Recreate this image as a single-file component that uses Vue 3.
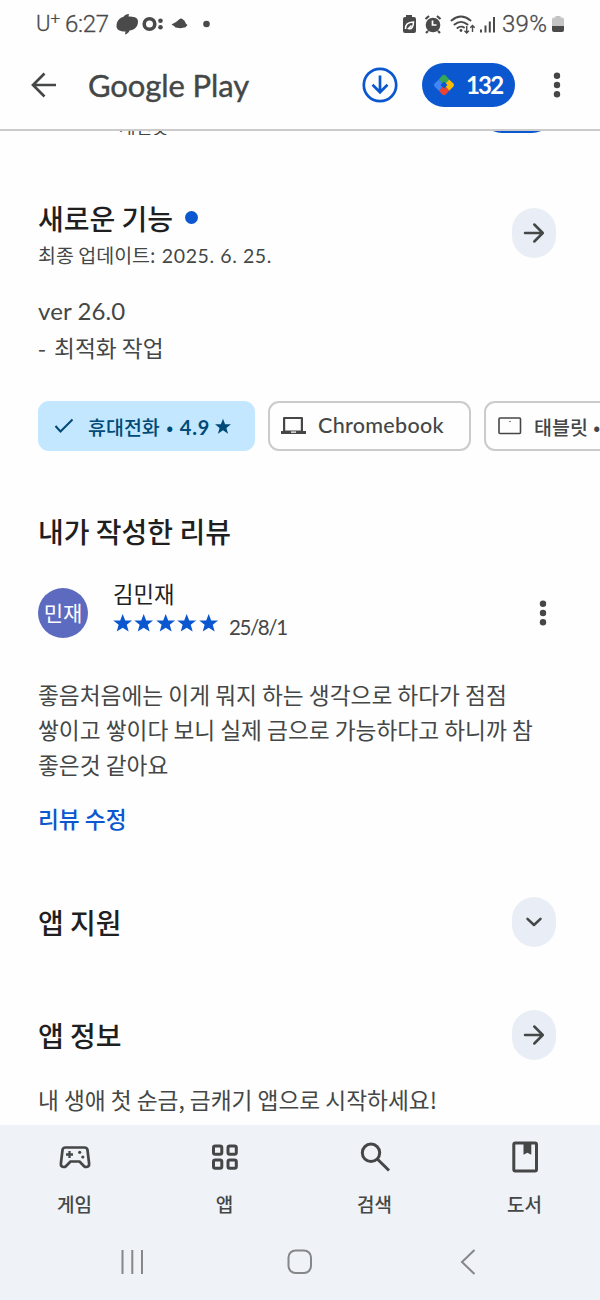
<script setup>
const reviewLines = [
  '좋음처음에는 이게 뭐지 하는 생각으로 하다가 점점',
  '쌓이고 쌓이다 보니 실제 금으로 가능하다고 하니까 참',
  '좋은것 같아요',
]
const star = 'M12 1.2l2.900 7.500h8l-6.200 5 2.200 7.800L12 17l-6.900 4.500 2.200-7.800-6.200-5h8z'
</script>

<template>
  <div class="screen">
    <div class="status">
      <span class="carrier">U<sup>+</sup></span>
      <span class="time">6:27</span>
      <svg class="notif" width="100" height="24" viewBox="0 0 100 24" fill="#4a4a4a">
        <path d="M13 2L12.500 4.500C17 4.500 22 5 22 9.500 22 15 18 18 13.500 18.500 13 20.500 11 22 9 22.500L9.500 19.500C4 19.500 .5 18 .5 14 .5 9 4 5.500 7.500 4.800 8.500 3.200 10.500 2.200 13 2z" />
        <circle cx="33.500" cy="12" r="5.300" fill="none" stroke="#4a4a4a" stroke-width="3.600" />
        <circle cx="44.500" cy="8.800" r="2.300" /><circle cx="44.500" cy="15.200" r="2.300" />
        <path d="M55.500 12.500l4.500-2.500 4-3.300q1-.6 2 0l2.500 2 1.500 3 1.500 1.300-2 2.200-5 1-5-.8-1.500-1.500z" />
        <circle cx="90.500" cy="12" r="3.300" />
      </svg>
      <svg class="sys" width="96" height="24" viewBox="0 0 96 24" fill="#4a4a4a">
        <path d="M5 3h6v2h2q2 0 2 2v12q0 2-2 2H4q-2 0-2-2V7q0-2 2-2h1z" />
        <path d="M4.500 17c0-5 2-6.500 8-7 0 5-2 7.500-5 6.500l3-3" fill="none" stroke="#fff" stroke-width="1.500" />
        <circle cx="32" cy="13" r="7.300" />
        <path d="M24.500 7l3.500-3M39.500 7L36 4M27 19l-2 2M37 19l2 2" stroke="#4a4a4a" stroke-width="2.200" />
        <path d="M31.500 8.500V13h4" fill="none" stroke="#fff" stroke-width="1.700" />
        <g fill="none" stroke="#4a4a4a" stroke-width="1.900" stroke-linecap="round">
          <path d="M50.500 8.500c6-5 13-5 19 0M53.500 12.500c4-3.500 9-3.500 13 0M56.500 16c2-1.800 5-1.800 6.500-.5" />
        </g>
        <circle cx="60" cy="18.500" r="1.400" />
        <path d="M65.700 14v7m-2.200-2.200l2.200 2.200 2.200-2.200M71.500 20v-6.500m-2.200 2.200l2.200-2.200 2.200 2.200" fill="none" stroke="#4a4a4a" stroke-width="1.400" />
        <path d="M80 17.500v3M84.500 13.500v7M88.800 9.500v11M93 5v15.500" stroke="#4a4a4a" stroke-width="2" />
      </svg>
      <span class="percent">39%</span>
      <svg class="battery" width="12" height="18" viewBox="0 0 12 18">
        <path d="M3.500 1h5v1.500H10q2 0 2 2V11H0V4.500q0-2 2-2h1.500z" fill="#c4c4c4" />
        <path d="M0 11h12v4q0 2-2 2H2q-2 0-2-2z" fill="#4a4a4a" />
      </svg>
    </div>

    <header class="header">
      <svg class="back" width="26" height="26" viewBox="0 0 26 26" fill="none" stroke="#444746" stroke-width="2.700">
        <path d="M25 13H2.500M13.500 1.500L2 13l11.500 11.500" />
      </svg>
      <span class="brand">Google Play</span>
      <svg class="download" width="36" height="36" viewBox="0 0 36 36" fill="none" stroke="#0b57d0" stroke-width="2.700">
        <circle cx="18" cy="18" r="16.200" />
        <path d="M18 8.500v16.500M10.500 17.800l7.500 7.500 7.500-7.500" />
      </svg>
      <div class="points">
        <svg width="22" height="24" viewBox="0 0 22 24">
          <path d="M5.800 6.500L9.300 2.600q1.700-1.600 3.400 0l3.500 3.900-5.200 5.500z" fill="#34a853" />
          <path d="M16.200 6.500l4.200 4q1.300 1.500 0 3l-4.200 4.200L11 12z" fill="#fbbc04" />
          <path d="M16.200 17.700l-3.500 3.700q-1.700 1.600-3.400 0l-3.500-3.700L11 12z" fill="#ea4335" />
          <path d="M5.800 6.500l-4.200 4q-1.300 1.500 0 3l4.200 4.200L11 12z" fill="#4285f4" />
          <path d="M11 8.500l3.500 3.500-3.500 3.500L7.500 12z" fill="#0b57d0" />
        </svg>
        <span>132</span>
      </div>
      <svg class="more" width="8" height="28" viewBox="0 0 8 28" fill="#444746">
        <circle cx="4" cy="4.700" r="3.200" /><circle cx="4" cy="14" r="3.200" /><circle cx="4" cy="23.300" r="3.200" />
      </svg>
    </header>

    <main class="content">
      <div class="previous"><span>개런못</span><i></i></div>

      <section class="news">
        <div>
          <h2 class="title">새로운 기능<b class="dot"></b></h2>
          <p class="updated">최종 업데이트: <span>2025. 6. 25.</span></p>
        </div>
        <button class="round">
          <svg width="22" height="22" viewBox="0 0 22 22"><path d="M2 11h17M11.300 2.500L19.800 11l-8.500 8.500" /></svg>
        </button>
      </section>
      <p class="version">ver 26.0</p>
      <p class="change"><span>-</span> 최적화 작업</p>

      <div class="chips">
        <div class="chip active">
          <svg class="check" width="20" height="16" viewBox="0 0 20 16" fill="none" stroke="#004a77" stroke-width="2"><path d="M1.500 8l5 5.500L18.500 1.500" /></svg>
          <span class="phone">휴대전화<em>•</em><strong>4.9</strong></span>
          <svg class="chip-star" width="16" height="16" viewBox="1 0 22 22" fill="#004a77"><path :d="star" /></svg>
        </div>
        <div class="chip chrome">
          <svg width="25" height="19" viewBox="0 0 25 19" fill="#444746"><path d="M4 0h17q1 0 1 1v13h3v3H0v-3h2V1q0-1 1-1zM4.200 2v11.500h15.600V2zM10 14.500v1.200h5v-1.200z" fill-rule="evenodd" /></svg>
          <span>Chromebook</span>
        </div>
        <div class="chip tablet">
          <svg width="24" height="18" viewBox="0 0 24 18" fill="none" stroke="#444746" stroke-width="1.600"><rect x="1" y="1" width="21.500" height="15.500" rx="1" /><circle cx="12" cy="4.500" r=".5" fill="#444746" stroke-width=".4" /></svg>
          <span>태블릿 <em>•</em></span>
        </div>
      </div>

      <h2 class="title mine">내가 작성한 리뷰</h2>
      <div class="author">
        <div class="avatar">민재</div>
        <div class="who">
          <div class="name">김민재</div>
          <div class="rating">
            <svg v-for="n in 5" :key="n" width="21.400" height="19" viewBox="1 0 22 22" fill="#0b57d0"><path :d="star" /></svg>
            <span>25/8/1</span>
          </div>
        </div>
        <svg class="more" width="8" height="28" viewBox="0 0 8 28" fill="#444746">
          <circle cx="4" cy="4.700" r="3.200" /><circle cx="4" cy="14" r="3.200" /><circle cx="4" cy="23.300" r="3.200" />
        </svg>
      </div>
      <div class="review"><p v-for="line in reviewLines" :key="line">{{ line }}</p></div>
      <a class="edit">리뷰 수정</a>

      <section class="row support">
        <h2 class="title">앱 지원</h2>
        <button class="round"><svg width="22" height="22" viewBox="0 0 22 22"><path d="M4.500 7.800L11 14l6.500-6.200" /></svg></button>
      </section>
      <section class="row info">
        <h2 class="title">앱 정보</h2>
        <button class="round"><svg width="22" height="22" viewBox="0 0 22 22"><path d="M2 11h17M11.300 2.500L19.800 11l-8.500 8.500" /></svg></button>
      </section>
      <p class="summary">내 생애 첫 순금, 금캐기 앱으로 시작하세요!</p>
    </main>

    <nav class="tabs">
      <div class="tab">
        <svg width="34" height="34" viewBox="0 0 34 34" fill="none" stroke="#444746" stroke-width="2.700" stroke-linejoin="round">
          <path d="M7.500 7.500h19q2.600 0 3 2.500l1.600 13.500q.3 3.500-3 3.500-1.200 0-2-.8L21.500 21.500h-9l-4.600 4.700q-.8.800-2 .8-3.300 0-3-3.500L4.500 10q.4-2.500 3-2.500z" />
          <path d="M8 14.500h7M11.500 11v7" stroke-width="2.300" />
          <circle cx="21.700" cy="12.300" r="1.600" fill="#444746" stroke="none" /><circle cx="24.800" cy="17" r="1.600" fill="#444746" stroke="none" />
        </svg><span>게임</span>
      </div>
      <div class="tab">
        <svg width="34" height="34" viewBox="0 0 34 34" fill="none" stroke="#444746" stroke-width="3">
          <rect x="5.500" y="6" width="8.300" height="8.300" rx="1.800" /><rect x="20" y="6" width="8.300" height="8.300" rx="1.800" />
          <rect x="5.500" y="20" width="8.300" height="8.300" rx="1.800" /><rect x="20" y="20" width="8.300" height="8.300" rx="1.800" />
        </svg><span>앱</span>
      </div>
      <div class="tab">
        <svg width="34" height="34" viewBox="0 0 34 34" fill="none" stroke="#444746" stroke-width="3"><circle cx="13" cy="12.800" r="8.700" /><path d="M19.300 19L31 30.500" /></svg><span>검색</span>
      </div>
      <div class="tab">
        <svg width="34" height="34" viewBox="0 0 34 34" fill="none" stroke="#444746" stroke-width="3"><rect x="5.800" y="3" width="22.700" height="28" rx="1.500" /><path d="M15.500 3v11.800l3.900-2 3.900 2V3z" fill="#444746" stroke="none" /></svg><span>도서</span>
      </div>
    </nav>
    <div class="system">
      <svg width="24" height="26" viewBox="0 0 24 26" fill="none" stroke="#858789" stroke-width="2"><path d="M2.500 1v24M12.300 1v24M22 1v24" /></svg>
      <svg width="26" height="26" viewBox="0 0 26 26" fill="none" stroke="#858789" stroke-width="2"><rect x="1.500" y="1.500" width="22.500" height="22.500" rx="7" /></svg>
      <svg width="16" height="26" viewBox="0 0 16 26" fill="none" stroke="#858789" stroke-width="2"><path d="M14.500 1L2 13l12.500 12" /></svg>
    </div>
  </div>
</template>

<style scoped>
* { box-sizing: border-box; }
h2, p { margin: 0; font-weight: 400; }
svg { display: block; flex: none; }
.screen {
  width: 600px; height: 1300px; overflow: hidden; display: flex; flex-direction: column;
  background: #fefefe; color: #444746; font-family: "Noto Sans CJK KR", sans-serif; white-space: nowrap;
}
.status { height: 47px; flex: none; display: flex; align-items: center; padding-left: 36px; font-family: Roboto, sans-serif; font-size: 24px; font-weight: 300; color: #4a4a4a; }
.status > span { -webkit-text-stroke: .3px #4a4a4a; }
.carrier { width: 29px; font-size: 22px; line-height: 28px; }
.carrier sup { font-size: 17px; line-height: 0; vertical-align: 7px; }
.time { width: 51px; letter-spacing: -.3px; }
.sys { margin-left: 185px; }
.percent { width: 51px; margin-left: 5px; letter-spacing: .3px; }
.battery { margin-left: -1px; }
.header { height: 84px; flex: none; display: flex; align-items: center; padding: 0 0 6px 31px; border-bottom: 2px solid #cbcbcb; }
.brand { width: 163px; margin-left: 31px; font: 400 31px/40px Lato, sans-serif; letter-spacing: -.1px; -webkit-text-stroke: .4px #444746; }
.download { margin-left: 111px; }
.points { width: 93px; height: 44px; margin-left: 24px; padding-left: 11px; display: flex; align-items: center; gap: 11px; border-radius: 22px; background: #0b57d0; color: #fff; font: 700 24px/44px Lato, sans-serif; letter-spacing: -1.800px; }
.header .more { margin-left: 38px; }
.content { height: 994px; flex: none; overflow: hidden; display: flex; flex-direction: column; padding-left: 38px; }
.previous { height: 4px; flex: none; overflow: hidden; display: flex; align-items: flex-end; }
.previous span { width: 439px; flex: none; padding-left: 81px; height: 26px; font-size: 18px; line-height: 26px; margin-bottom: -4px; }
.previous i { flex: none; width: 74px; height: 44px; border-radius: 22px; background: #0b57d0; margin: 0 0 2.500px 3px; }
.news { display: flex; justify-content: space-between; padding: 63px 44px 0 0; height: 143px; flex: none; }
.title { height: 40px; line-height: 40px; font-size: 28px; font-weight: 500; color: #1f1f1f; }
.dot { display: inline-block; width: 13px; height: 13px; border-radius: 50%; background: #0b57d0; margin-left: 12px; vertical-align: 6px; }
.updated { font-size: 19.500px; line-height: 34px; }
.updated span { font-family: Lato, sans-serif; letter-spacing: .6px; margin-left: 2px; }
.round { width: 44px; height: 50px; padding: 0; border: 0; border-radius: 22px; background: #e9eef6; display: flex; align-items: center; justify-content: center; }
.round path { fill: none; stroke: #444746; stroke-width: 2.500; stroke-linecap: round; stroke-linejoin: round; }
.news .round { margin-top: 10px; }
.version { font: 400 24px/32px Lato, sans-serif; margin-top: 17px; letter-spacing: .1px; }
.change { font-size: 22.700px; line-height: 36px; margin-top: 3px; }
.change span { display: inline-block; width: 11px; }
.chips { display: flex; gap: 13px; height: 50px; flex: none; margin-top: 35px; }
.chip { flex: none; display: flex; align-items: center; height: 50px; border: 2px solid #cacccb; border-radius: 11px; font-size: 19.500px; font-weight: 500; }
.active { width: 217px; border: 0; padding-left: 16px; background: #c2e7ff; color: #004a77; }
.phone { margin-left: 14px; width: 122px; }
.chip em { font-style: normal; }
.phone em { display: inline-block; width: 20px; text-align: center; }
.phone strong { font: 700 20px Lato, sans-serif; letter-spacing: .8px; }
.chip-star { margin-left: 5px; }
.chrome { width: 203px; padding-left: 11px; font: 500 21.500px Lato, sans-serif; letter-spacing: .3px; }
.chrome span { margin: 0 0 2px 12px; }
.tablet { width: 180px; padding-left: 12px; }
.tablet span { margin-left: 12px; }
.tablet em { margin-left: 1px; }
.mine { margin-top: 60px; flex: none; }
.author { display: flex; align-items: center; height: 60px; margin-top: 32px; flex: none; }
.avatar { width: 50px; height: 50px; border-radius: 50%; background: #5c6bc0; color: #fff; font-size: 21px; line-height: 48px; text-align: center; }
.who { width: 390px; margin-left: 24px; }
.name { height: 30px; padding-left: 1px; font-size: 22.300px; line-height: 20px; color: #1f1f1f; }
.rating { height: 30px; display: flex; }
.rating span { margin-left: 10px; font: 400 20.500px/28px Lato, sans-serif; letter-spacing: -1.400px; }
.author .more { margin-left: 37px; }
.review { font-size: 22.700px; line-height: 35px; margin-top: 34px; }
.edit { font-size: 22.700px; font-weight: 500; line-height: 36px; color: #0b57d0; margin-top: 19px; }
.row { height: 50px; flex: none; display: flex; justify-content: space-between; align-items: center; padding-right: 44px; }
.row .title { line-height: 41px; }
.support { margin-top: 60px; }
.info { margin-top: 63px; }
.summary { font-size: 22.700px; line-height: 36px; margin-top: 22px; }
.tabs { height: 97px; flex: none; display: grid; grid-template-columns: repeat(4, 150px); background: #eff2f7; }
.tab { display: flex; flex-direction: column; align-items: center; padding-top: 15px; font-size: 19px; font-weight: 500; line-height: 30px; }
.tab span { margin: 15px 1px 0 0; }
.system { height: 78px; flex: none; display: flex; padding: 27px 0 0 120px; background: #eff2f7; }
.system svg:nth-child(2) { margin-left: 143px; }
.system svg:nth-child(3) { margin-left: 147px; }
</style>

<style>
body { margin: 0; }
</style>
